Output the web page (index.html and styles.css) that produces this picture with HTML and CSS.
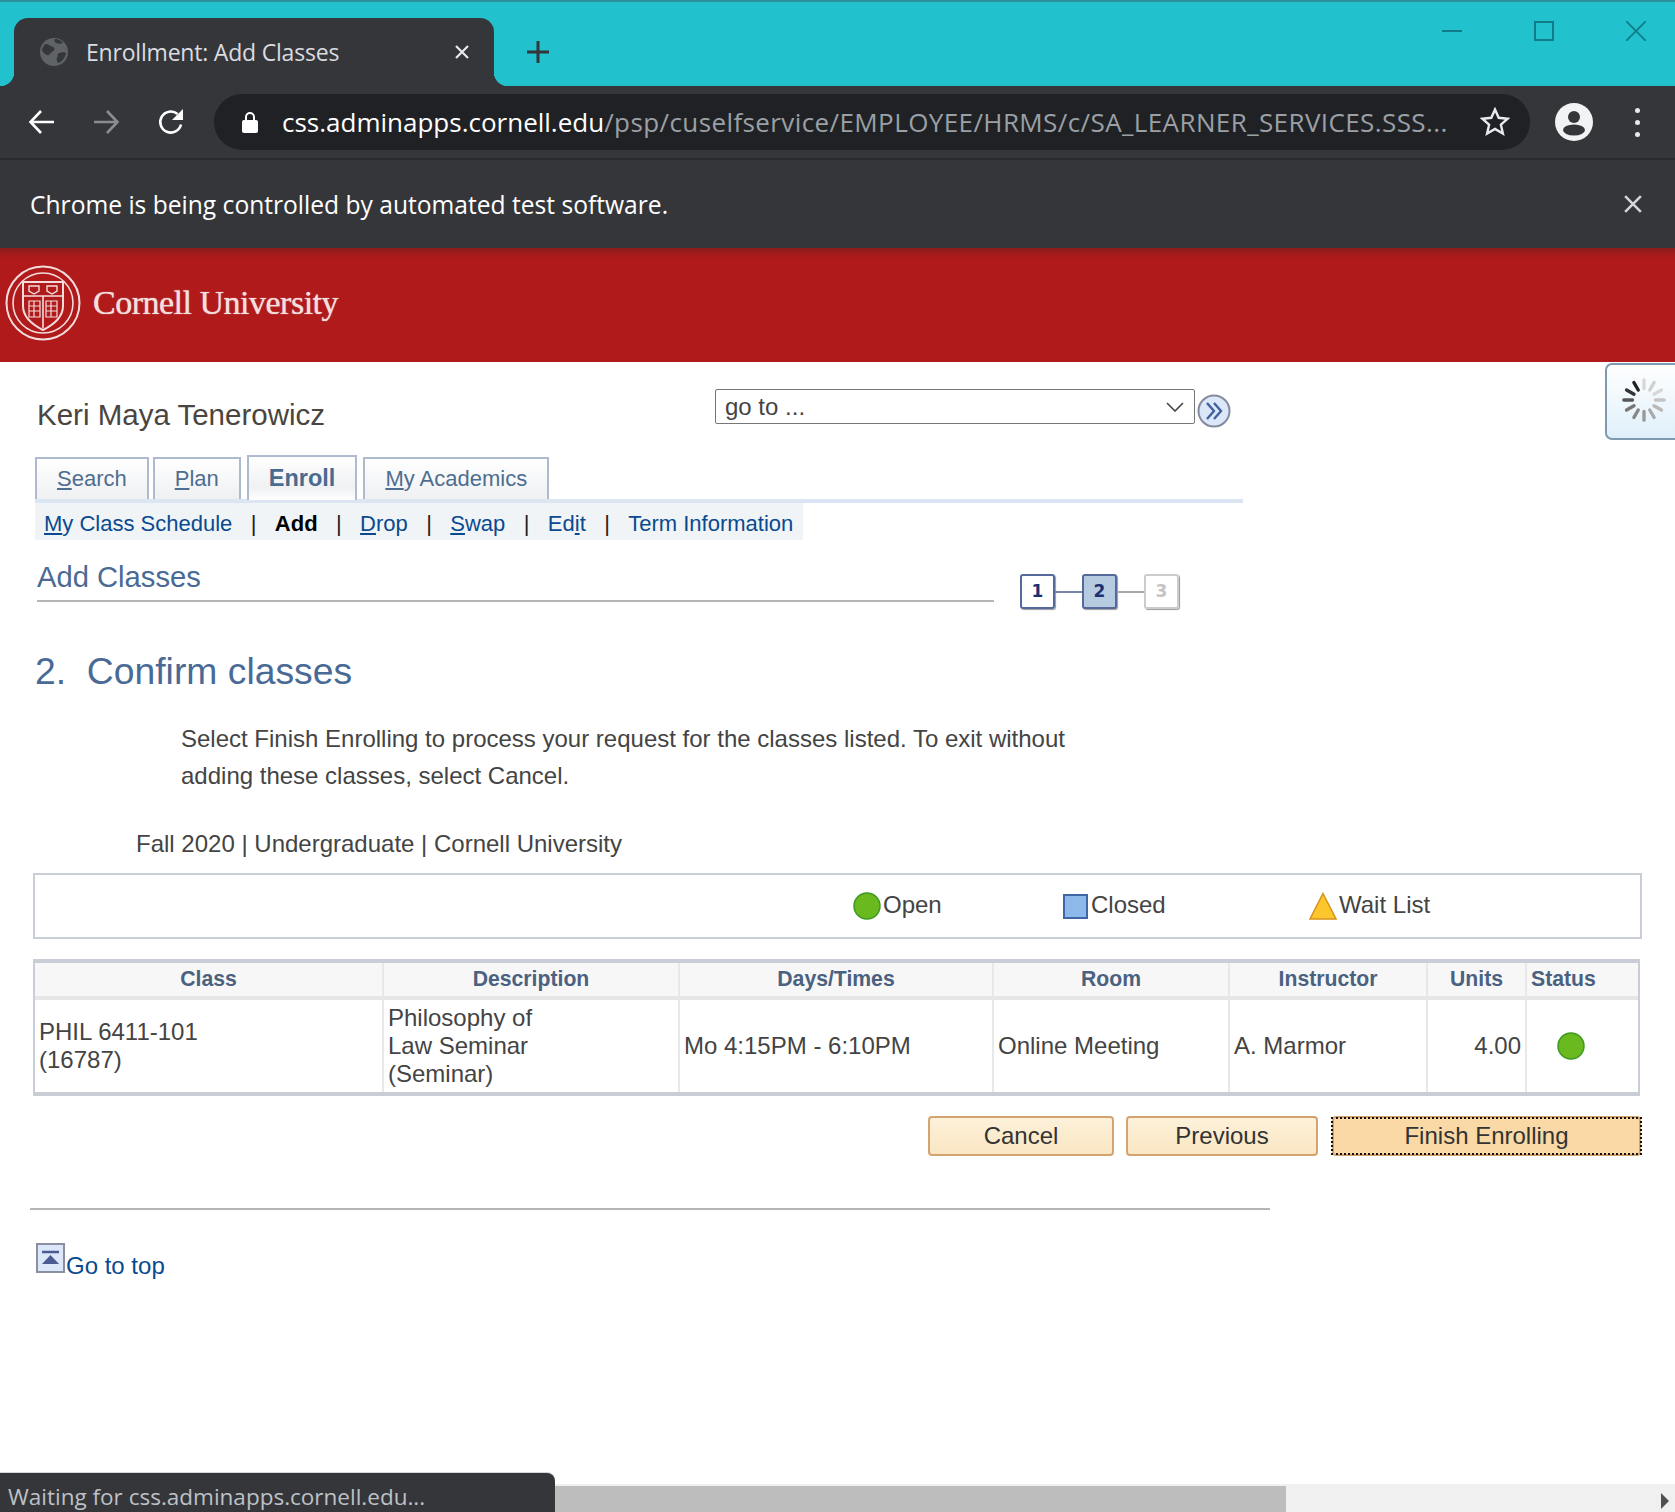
FILE: index.html
```html
<!DOCTYPE html>
<html lang="en">
<head>
    <meta charset="UTF-8">
    <title>Enrollment: Add Classes</title>
    <link rel="stylesheet" href="styles.css">
</head>
<body>

<!-- Browser chrome -->
<div class="tabstrip">
    <div class="tab">
        <svg class="favicon" viewBox="0 0 28 28">
            <circle cx="14" cy="14" r="14" fill="#5f6368"/>
            <path d="M5 6c4 0 5 2 8 3s1 4-1 5-2 4-5 3-5-4-5-6zM19 15c3-1 6-1 7 0-1 5-4 9-8 10-1-2-2-3-1-5s0-4 2-5zM15 1c3 0 7 2 8 4-2 1-5 1-7 0s-2-3-1-4z" fill="#35363a"/>
        </svg>
        <span class="tab-title">Enrollment: Add Classes</span>
        <svg class="tab-close" viewBox="0 0 16 16"><path d="M2 2l12 12M14 2L2 14" stroke="#e8eaed" stroke-width="2.2" fill="none"/></svg>
    </div>
    <svg class="new-tab" viewBox="0 0 24 24"><path d="M12 1v22M1 12h22" stroke="#35363a" stroke-width="3" fill="none"/></svg>
    <div class="win-controls">
        <svg viewBox="0 0 20 20"><path d="M0 10h20" stroke="#0f7c88" stroke-width="2"/></svg>
        <svg viewBox="0 0 20 20"><rect x="1" y="1" width="18" height="18" fill="none" stroke="#0f7c88" stroke-width="2"/></svg>
        <svg viewBox="0 0 20 20"><path d="M0 0l20 20M20 0L0 20" stroke="#0f7c88" stroke-width="1.800"/></svg>
    </div>
</div>

<div class="toolbar">
    <svg class="tool-icon" viewBox="0 0 28 28"><path d="M26 14H3M13 3L2.500 14 13 25" stroke="#fff" stroke-width="2.600" fill="none"/></svg>
    <svg class="tool-icon" viewBox="0 0 28 28"><path d="M2 14h23M15 3l10.500 11L15 25" stroke="#8b8c8e" stroke-width="2.600" fill="none"/></svg>
    <svg class="tool-icon" viewBox="0 0 28 28"><path d="M24 16.500A10.500 10.500 0 1 1 20.500 6" stroke="#fff" stroke-width="2.600" fill="none"/><path d="M26 1v11H15z" fill="#fff"/></svg>
    <div class="omnibox">
        <svg class="lock" viewBox="0 0 16 22"><path d="M4 9V6a4 4 0 0 1 8 0v3" stroke="#fff" stroke-width="2" fill="none"/><rect x="0" y="9" width="16" height="13" rx="2" fill="#fff"/></svg>
        <span class="url"><span class="url-host">css.adminapps.cornell.edu</span><span class="url-path">/psp/cuselfservice/EMPLOYEE/HRMS/c/SA_LEARNER_SERVICES.SSS...</span></span>
        <svg class="star" viewBox="0 0 30 30"><path d="M15 2.500l3.700 8.300 9 .9-6.800 6 2 8.800-7.900-4.600-7.900 4.600 2-8.800-6.800-6 9-.9z" fill="none" stroke="#e8eaed" stroke-width="2.400"/></svg>
    </div>
    <svg class="avatar" viewBox="0 0 38 38">
        <circle cx="19" cy="19" r="19" fill="#f1f3f4"/>
        <circle cx="19" cy="14" r="6" fill="#35363a"/>
        <ellipse cx="19" cy="27" rx="11" ry="5.500" fill="#35363a"/>
    </svg>
    <div class="menu-dots"><i></i><i></i><i></i></div>
</div>

<div class="infobar">
    <span>Chrome is being controlled by automated test software.</span>
    <svg class="info-close" viewBox="0 0 16 16"><path d="M1 1l14 14M15 1L1 15" stroke="#d5d7da" stroke-width="2.200" fill="none"/></svg>
</div>

<!-- Cornell banner -->
<div class="banner">
    <svg class="seal" viewBox="0 0 76 76">
        <g fill="none" stroke="#f3dcdc">
            <circle cx="38" cy="38" r="36.500" stroke-width="2"/>
            <circle cx="38" cy="38" r="30" stroke-width="1.600"/>
            <path d="M18 17h40v24c0 12-10 19-20 24-10-5-20-12-20-24z" stroke-width="2"/>
            <path d="M18 31h40M38 31v32" stroke-width="1.600"/>
            <path d="M24 21h10v5l-5 3-5-3zM42 21h10v5l-5 3-5-3z" stroke-width="1.400"/>
            <path d="M24 36h11v16H24zM41 36h11v16H41zM24 41h11M24 46h11M41 41h11M41 46h11M29 36v16M46 36v16" stroke-width="1.200"/>
        </g>
    </svg>
    <span class="wordmark">Cornell University</span>
</div>

<!-- Page -->
<div class="page">
    <div class="head-row">
        <div class="student-name">Keri Maya Tenerowicz</div>
        <div class="goto">
            <span>go to ...</span>
            <svg class="goto-caret" viewBox="0 0 18 10"><path d="M1 1l8 8 8-8" stroke="#444" stroke-width="1.600" fill="none"/></svg>
        </div>
        <svg class="goto-btn" viewBox="0 0 34 34">
            <circle cx="17" cy="17" r="15.500" fill="#dce8fa" stroke="#858b9e" stroke-width="2"/>
            <path d="M10 9l7 8-7 8M17 9l7 8-7 8" fill="none" stroke="#41609f" stroke-width="2.400"/>
        </svg>
    </div>

    <div class="tabs">
        <div class="page-tab"><u>S</u>earch</div>
        <div class="page-tab"><u>P</u>lan</div>
        <div class="page-tab active">Enroll</div>
        <div class="page-tab"><u>M</u>y Academics</div>
    </div>
    <div class="tabs-line"></div>

    <div class="subnav">
        <a class="sub-first"><u>M</u>y Class Schedule</a><i>|</i>
        <b>Add</b><i>|</i>
        <a><u>D</u>rop</a><i>|</i>
        <a><u>S</u>wap</a><i>|</i>
        <a>Ed<u>i</u>t</a><i>|</i>
        <a>Term Information</a>
    </div>

    <div class="title-row">
        <div class="title">Add Classes</div>
        <div class="steps">
            <span class="step done">1</span><span class="step-link"></span>
            <span class="step current">2</span><span class="step-link grey"></span>
            <span class="step todo">3</span>
        </div>
    </div>

    <h1 class="step-title">2.&nbsp; Confirm classes</h1>

    <p class="intro">Select Finish Enrolling to process your request for the classes listed. To exit without<br>adding these classes, select Cancel.</p>

    <div class="term">Fall 2020 | Undergraduate | Cornell University</div>

    <div class="legend">
        <div class="legend-item">
            <svg class="dot-icon" viewBox="0 0 28 28"><circle cx="14" cy="14" r="13" fill="#6aba1f" stroke="#3d9a22" stroke-width="1.500"/></svg>
            <span>Open</span>
        </div>
        <div class="legend-item">
            <svg class="square-icon" viewBox="0 0 25 25"><rect x="1" y="1" width="23" height="23" fill="#8db8ea" stroke="#3f66a5" stroke-width="2"/></svg>
            <span>Closed</span>
        </div>
        <div class="legend-item">
            <svg class="tri-icon" viewBox="0 0 28 28"><path d="M14 1.500L27 27H1z" fill="#fdc62c" stroke="#d6921a" stroke-width="1.500"/></svg>
            <span>Wait List</span>
        </div>
    </div>

    <table class="classes">
        <colgroup>
            <col class="c-class"><col class="c-desc"><col class="c-days"><col class="c-room"><col class="c-inst"><col class="c-units"><col class="c-status">
        </colgroup>
        <tr>
            <th>Class</th><th>Description</th><th>Days/Times</th><th>Room</th><th>Instructor</th><th>Units</th><th class="th-status">Status</th>
        </tr>
        <tr>
            <td>PHIL 6411-101<br>(16787)</td>
            <td>Philosophy of<br>Law Seminar<br>(Seminar)</td>
            <td>Mo 4:15PM - 6:10PM</td>
            <td>Online Meeting</td>
            <td>A. Marmor</td>
            <td class="num">4.00</td>
            <td class="status-cell"><svg class="dot-icon" viewBox="0 0 28 28"><circle cx="14" cy="14" r="13" fill="#6aba1f" stroke="#3d9a22" stroke-width="1.500"/></svg></td>
        </tr>
    </table>

    <div class="buttons">
        <button class="btn btn-cancel">Cancel</button>
        <button class="btn btn-prev">Previous</button>
        <button class="btn btn-finish"><span>Finish Enrolling</span></button>
    </div>

    <div class="bottom-rule"></div>

    <div class="to-top">
        <svg class="top-icon" viewBox="0 0 29 30">
            <rect x="1" y="1" width="27" height="28" fill="#dce8fa" stroke="#8b90a0" stroke-width="2"/>
            <path d="M6 9h17" stroke="#4b5a90" stroke-width="2.500"/>
            <path d="M14.500 12L23 21H6z" fill="#4b5a90"/>
        </svg>
        <a>Go to top</a>
    </div>
</div>

<!-- Things lying over the page -->
<div class="loader">
    <svg viewBox="0 0 48 48" class="spinner">
        <g stroke-width="3.500" stroke-linecap="round">
            <path d="M24 3v9" stroke="#d8d8d8"/>
            <path d="M34.500 5.800l-4.500 7.800" stroke="#d0d0d0"/>
            <path d="M42.200 13.500l-7.800 4.500" stroke="#d8d8d8"/>
            <path d="M45 24h-9" stroke="#c4c4c4"/>
            <path d="M42.200 34.500l-7.800-4.500" stroke="#b8b8b8"/>
            <path d="M34.500 42.200L30 34.400" stroke="#aaa"/>
            <path d="M24 45v-9" stroke="#999"/>
            <path d="M13.500 42.200l4.500-7.800" stroke="#888"/>
            <path d="M5.800 34.500l7.800-4.500" stroke="#777"/>
            <path d="M3 24h9" stroke="#555"/>
            <path d="M5.800 13.500l7.800 4.500" stroke="#333"/>
            <path d="M13.500 5.800l4.500 7.800" stroke="#222"/>
        </g>
    </svg>
</div>

<div class="hscroll">
    <div class="hscroll-thumb"></div>
    <span class="hscroll-arrow"></span>
</div>

<div class="status-bubble">Waiting for css.adminapps.cornell.edu...</div>

</body>
</html>
```

FILE: styles.css
```css
html, body {
    margin: 0;
    padding: 0;
}

body {
    position: relative;
    height: 1512px;
    overflow: hidden;
    background: #fff;
    font-family: "Liberation Sans", Arial, sans-serif;
    color: #444;
}

/* Browser chrome */
.tabstrip {
    display: flex;
    align-items: flex-end;
    height: 84px;
    border-top: 2px solid #2e8f9c;
    background: #22c1ce;
    padding-left: 14px;
}

.tab {
    position: relative;
    display: flex;
    align-items: center;
    box-sizing: border-box;
    width: 480px;
    height: 68px;
    padding: 0 24px 0 26px;
    background: #35363a;
    border-radius: 14px 14px 0 0;
}

/* little flares at the bottom corners of the tab */
.tab::before, .tab::after {
    content: "";
    position: absolute;
    bottom: 0;
    width: 14px;
    height: 14px;
}

.tab::before {
    left: -14px;
    background: radial-gradient(circle at 0 0, #22c1ce 14px, #35363a 14.5px);
}

.tab::after {
    right: -14px;
    background: radial-gradient(circle at 100% 0, #22c1ce 14px, #35363a 14.5px);
}

.favicon {
    width: 28px;
    height: 28px;
    flex: none;
}

.tab-title {
    margin-left: 18px;
    flex: 1;
    font-family: "Open Sans", sans-serif;
    font-size: 23px;
    letter-spacing: -0.2px;
    color: #dadce0;
}

.tab-close {
    width: 16px;
    height: 16px;
}

.new-tab {
    width: 24px;
    height: 24px;
    margin: 0 0 22px 32px;
}

.win-controls {
    margin-left: auto;
    align-self: flex-start;
    display: flex;
    gap: 72px;
    padding: 19px 29px 0 0;
}

.win-controls svg {
    width: 20px;
    height: 20px;
}

.toolbar {
    display: flex;
    align-items: center;
    box-sizing: border-box;
    height: 74px;
    padding: 0 0 0 28px;
    background: #35363a;
    border-bottom: 2px solid #2a2b2e;
}

.tool-icon {
    width: 28px;
    height: 28px;
    margin-right: 36px;
}

.tool-icon:nth-child(3) {
    margin-left: 1px;
    margin-right: 29px;
}

.omnibox {
    display: flex;
    align-items: center;
    box-sizing: border-box;
    width: 1316px;
    height: 56px;
    padding: 0 20px 0 28px;
    border-radius: 28px;
    background: #202124;
}

.lock {
    width: 16px;
    height: 22px;
    flex: none;
}

.url {
    margin-left: 24px;
    flex: 1;
    font-family: "Open Sans", sans-serif;
    font-size: 26px;
    color: #9aa0a6;
    white-space: nowrap;
    overflow: hidden;
}

.url-host {
    color: #fff;
}

.url-path {
    letter-spacing: 0.4px;
}

.star {
    width: 30px;
    height: 30px;
    flex: none;
}

.avatar {
    width: 38px;
    height: 38px;
    margin-left: 25px;
}

.menu-dots {
    display: flex;
    flex-direction: column;
    gap: 7px;
    margin-left: 42px;
}

.menu-dots i {
    display: block;
    width: 5px;
    height: 5px;
    border-radius: 50%;
    background: #e8eaed;
}

.infobar {
    display: flex;
    align-items: center;
    justify-content: space-between;
    height: 88px;
    padding: 0 33px 0 30px;
    background: #35363a;
    font-family: "Open Sans", sans-serif;
    font-size: 24.600px;
    color: #fff;
}

.info-close {
    width: 18px;
    height: 18px;
}

/* Cornell banner */
.banner {
    display: flex;
    align-items: center;
    box-sizing: border-box;
    height: 114px;
    padding: 0 0 4px 5px;
    background: linear-gradient(#8a1c1c, #b01a1a 10px);
}

.seal {
    width: 76px;
    height: 76px;
}

.wordmark {
    margin-left: 12px;
    font-family: "Liberation Serif", serif;
    font-size: 34px;
    letter-spacing: -0.5px;
    color: #f3dede;
    text-shadow: 0 0 1px #f3dede;
}

/* Page */
.page {
    padding-left: 35px;
}

.head-row {
    display: flex;
    align-items: flex-start;
    height: 92px;
    box-sizing: border-box;
    padding-top: 27px;
}

.student-name {
    width: 678px;
    margin: 9px 0 0 2px;
    font-size: 29.500px;
    line-height: 34px;
    color: #4a4540;
}

.goto {
    display: flex;
    align-items: center;
    justify-content: space-between;
    box-sizing: border-box;
    width: 480px;
    height: 35px;
    padding: 0 10px 0 9px;
    border: 1px solid #767676;
    border-radius: 2px;
    font-size: 24px;
    color: #444;
}

.goto-caret {
    width: 18px;
    height: 10px;
}

.goto-btn {
    width: 34px;
    height: 34px;
    margin: 5px 0 0 2px;
}

.tabs {
    display: flex;
    align-items: flex-end;
    height: 45px;
}

.page-tab {
    box-sizing: border-box;
    height: 42px;
    margin-right: 4px;
    padding: 0 20px;
    border: 2px solid #aebbce;
    border-bottom: 0;
    background: linear-gradient(#fff, #eef0f2);
    font-size: 22px;
    line-height: 40px;
    color: #4f6d8f;
}

.page-tab.active {
    height: 45px;
    margin: 0 6px 0 2px;
    font-weight: bold;
    font-size: 23.500px;
    line-height: 42px;
    position: relative;
    top: 1px;
    color: #4a6a8e;
    background: linear-gradient(#fff, #f0f1f3 70%, #fff);
}

.tabs-line {
    width: 1208px;
    height: 4px;
    background: #dce6f3;
}

.subnav {
    display: inline-flex;
    align-items: center;
    box-sizing: border-box;
    height: 37px;
    padding: 4px 10px 0 9px;
    background: #f0f4f6;
    font-size: 22px;
    color: #0a4a8f;
    vertical-align: top;
}

.subnav i {
    font-style: normal;
    color: #222;
    margin: 0 18.400px;
}

.subnav b {
    color: #000;
}

.title-row {
    display: flex;
    align-items: flex-start;
    margin-left: 2px;
}

.title {
    box-sizing: border-box;
    width: 957px;
    height: 62px;
    padding-top: 20px;
    border-bottom: 2px solid #b5b5b5;
    font-size: 29.200px;
    line-height: 34px;
    color: #4a6a96;
}

.steps {
    display: flex;
    align-items: center;
    margin: 34px 0 0 26px;
}

.step {
    box-sizing: border-box;
    width: 35px;
    height: 35px;
    border: 2px solid #56699c;
    border-radius: 3px;
    box-shadow: 1px 1px 1px #999;
    font-family: "DejaVu Sans", sans-serif;
    font-weight: bold;
    font-size: 17px;
    line-height: 30px;
    text-align: center;
    color: #1c2f72;
}

.step.current {
    background: #b7cbe0;
}

.step.todo {
    border-color: #ccc;
    color: #c4c4c4;
}

.step-link {
    width: 27px;
    height: 2px;
    background: #7583a8;
}

.step-link.grey {
    background: #aaa;
}

.step-title {
    margin: 40px 0 0;
    font-size: 37.300px;
    font-weight: normal;
    line-height: 44px;
    color: #4a6a96;
}

.intro {
    margin: 27px 0 0 146px;
    font-size: 24px;
    line-height: 37px;
}

.term {
    margin: 35px 0 0 101px;
    font-size: 24px;
    line-height: 30px;
}

.legend {
    display: grid;
    grid-template-columns: 210px 246px auto;
    align-items: center;
    box-sizing: border-box;
    width: 1609px;
    height: 66px;
    margin: 14px 0 0 -2px;
    padding-left: 818px;
    border: 2px solid #c9ced6;
    font-size: 24px;
}

.legend-item {
    display: flex;
    align-items: center;
    gap: 2px;
}

.legend-item span {
    margin-top: -2px;
}

.dot-icon {
    width: 28px;
    height: 28px;
    flex: none;
}

.square-icon {
    width: 25px;
    height: 25px;
    margin-right: 1px;
    flex: none;
}

.tri-icon {
    width: 28px;
    height: 28px;
    flex: none;
}

.classes {
    table-layout: fixed;
    border-collapse: separate;
    border-spacing: 0;
    width: 1607px;
    margin: 20px 0 0 -2px;
    border-style: solid;
    border-color: #c9ced6;
    border-width: 4px 2px;
}

.c-class { width: 347px; }
.c-desc { width: 296px; }
.c-days { width: 314px; }
.c-room { width: 236px; }
.c-inst { width: 198px; }
.c-units { width: 99px; }

.classes th {
    height: 31px;
    padding: 0 0 2px;
    border-left: 2px solid #e8e8e8;
    border-bottom: 4px solid #e6e6e6;
    background: #f7f7f7;
    font-size: 21.200px;
    color: #4a6180;
}

.classes th:first-child, .classes td:first-child {
    border-left: 0;
}

.classes th.th-status {
    text-align: left;
    padding-left: 4px;
}

.classes td {
    height: 92px;
    padding: 0 4px;
    border-left: 2px solid #e8e8e8;
    font-size: 24px;
    line-height: 28px;
}

.classes td.num {
    text-align: right;
}

.status-cell svg {
    display: block;
    margin-left: 26px;
}

.buttons {
    display: flex;
    justify-content: flex-end;
    gap: 12px;
    width: 1606px;
    margin-top: 20px;
}

.btn {
    box-sizing: border-box;
    height: 40px;
    padding: 0;
    border: 2px solid #d3a470;
    border-radius: 4px;
    background: linear-gradient(#fdf1da, #fae6c2);
    font-family: "Liberation Sans", Arial, sans-serif;
    font-size: 24px;
    color: #333;
}

.btn-cancel { width: 186px; }
.btn-prev { width: 192px; }

.btn-finish {
    width: 309px;
    margin-left: 2px;
    background: #fad9a6;
}

.btn-finish span {
    display: block;
    height: 32px;
    line-height: 32px;
    outline: 2px dotted #111;
    outline-offset: 1px;
}

.bottom-rule {
    width: 1240px;
    height: 2px;
    margin: 52px 0 0 -5px;
    background: #b5b5b5;
}

.to-top {
    display: flex;
    align-items: flex-start;
    gap: 1px;
    margin: 33px 0 0 1px;
    font-size: 24px;
    color: #0a4a8f;
}

.top-icon {
    width: 29px;
    height: 30px;
    flex: none;
}

.to-top a {
    margin-top: 9px;
    line-height: 28px;
}

/* Over the page */
.loader {
    position: absolute;
    top: 363px;
    right: -6px;
    display: flex;
    align-items: center;
    box-sizing: border-box;
    width: 76px;
    height: 77px;
    padding: 0 0 4px 14px;
    border: 2px solid #7f9ab0;
    border-radius: 7px;
    background: linear-gradient(#fff, #dff0fa);
}

.spinner {
    width: 46px;
    height: 46px;
}

.hscroll {
    position: absolute;
    left: 0;
    right: 0;
    bottom: 0;
    height: 28px;
    background: #f0f0f0;
}

.hscroll-thumb {
    position: absolute;
    left: 0;
    top: 2px;
    bottom: 0;
    width: 1286px;
    background: #bdbdbd;
}

.hscroll-arrow {
    position: absolute;
    right: 6px;
    top: 9px;
    border-left: 8px solid #505050;
    border-top: 8px solid transparent;
    border-bottom: 8px solid transparent;
}

.status-bubble {
    position: absolute;
    left: 0;
    bottom: 0;
    box-sizing: border-box;
    width: 555px;
    height: 39px;
    padding-left: 8px;
    border-radius: 0 8px 0 0;
    background: #35363a;
    box-shadow: 0 -1px 0 #d8d8d8;
    font-family: "Open Sans", sans-serif;
    font-size: 22.500px;
    line-height: 47px;
    color: #bdc1c6;
}
```
